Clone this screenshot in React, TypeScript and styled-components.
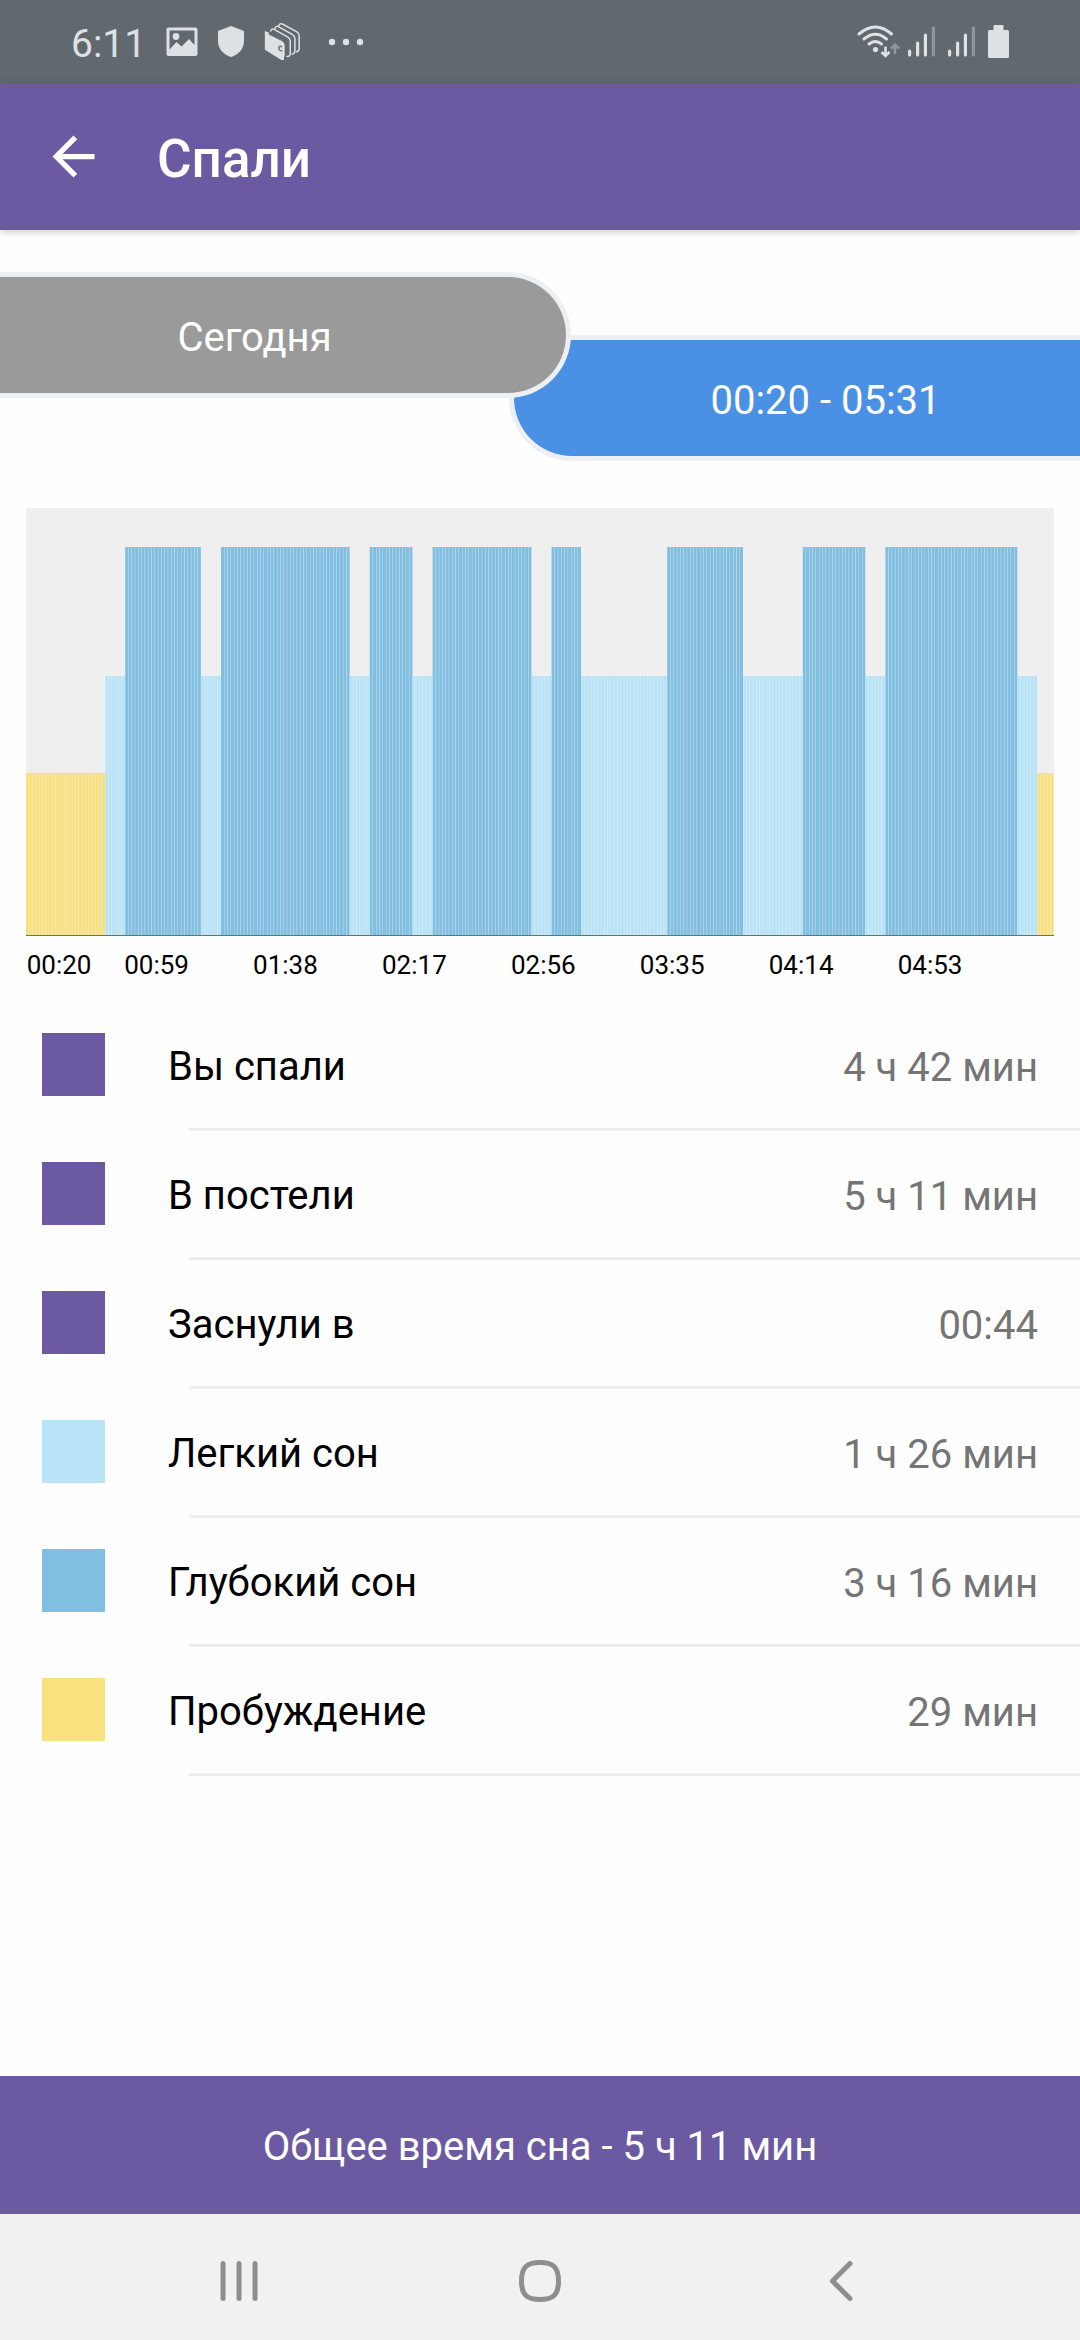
import React from 'react';
import styled, { createGlobalStyle } from 'styled-components';

const color = {
  purple: '#6b5aa2',
  deep: '#80bfe1',
  light: '#b9e4f7',
  awake: '#f9e180',
  line: '#ededed',
  status: '#dde1e4',
  nav: '#8e8e8e',
};

const GlobalStyle = createGlobalStyle`
  *, *::before, *::after { box-sizing: border-box; }
  body {
    margin: 0;
    background: #fefefe;
    font-family: Roboto, "Noto Sans", sans-serif;
    font-size: 40px;
    line-height: 48px;
    color: #000;
  }
  button {
    margin: 0;
    padding: 0;
    border: 0;
    background: none;
    color: inherit;
    font: inherit;
    cursor: pointer;
  }
  svg { display: block; flex: none; }
`;

const Screen = styled.div`
  display: flex;
  flex-direction: column;
  min-height: 100vh;
`;

const StatusBar = styled.div`
  display: flex;
  align-items: center;
  justify-content: space-between;
  height: 83px;
  padding: 0 71px;
  background: #61686e;
  color: ${color.status};
`;

const StatusGroup = styled.div<{ $gap: number }>`
  display: flex;
  align-items: center;
  gap: ${(p) => p.$gap}px;
`;

const Clock = styled.span`
  padding-top: 5px;
  font-size: 39px;
`;

const MoreSlot = styled.span`
  margin-left: 8px;
`;

const AppBar = styled.header`
  display: flex;
  align-items: center;
  gap: 52px;
  height: 147px;
  padding: 0 42px;
  background: ${color.purple};
  color: #fff;
  box-shadow: 0 2px 8px rgba(0, 0, 0, 0.2);
`;

const Title = styled.h1`
  margin: 0;
  padding-top: 4px;
  font-size: 53px;
  line-height: 64px;
  font-weight: 500;
`;

const Main = styled.main`
  flex: 1;
  display: flex;
  flex-direction: column;
`;

const Period = styled.div`
  display: flex;
  align-items: flex-start;
  margin-top: 42px;
`;

const Pill = styled.button`
  flex: 1 1 0;
  height: 126px;
  border: 5px solid #eeeff2;
  color: #fff;
`;

const DayPill = styled(Pill)`
  position: relative;
  z-index: 1;
  margin-right: -31px;
  padding: 6px 57px 0 0;
  border-left: 0;
  border-radius: 0 63px 63px 0;
  background: #9a9a9a;
`;

const RangePill = styled(Pill)`
  margin: 63px 0 0 -31px;
  padding: 6px 0 0 57px;
  border-right: 0;
  border-radius: 63px 0 0 63px;
  background: #4a90e4;
`;

const Chart = styled.figure`
  margin: 47px 26px 0;
`;

const Plot = styled.div`
  height: 428px;
  background: #efefef;
  border-bottom: 1px solid #6f6f6f;
`;

const Axis = styled.div`
  display: grid;
  grid-template-columns: minmax(0, 20fr) repeat(7, minmax(0, 39fr)) minmax(0, 18fr);
  margin-top: 14px;
  font-size: 26px;
  line-height: 30px;
`;

const Tick = styled.span`
  text-align: center;
  white-space: nowrap;
`;

const Stats = styled.ul`
  margin: 22px 0 0;
  padding: 0;
  list-style: none;
`;

const Stat = styled.li`
  display: flex;
  align-items: center;
  height: 129px;
  padding: 0 42px 4px;
  background: linear-gradient(${color.line}, ${color.line}) 189px 100% / 100% 3px no-repeat;
`;

const Swatch = styled.span<{ $color: string }>`
  width: 63px;
  height: 63px;
  margin-right: 63px;
  background: ${(p) => p.$color};
`;

const StatName = styled.span`
  flex: 1;
  padding-top: 4px;
`;

const StatValue = styled.span`
  padding-top: 6px;
  color: #757575;
`;

const Total = styled.footer`
  display: flex;
  align-items: center;
  justify-content: center;
  height: 138px;
  padding-top: 4px;
  background: ${color.purple};
  color: #fff;
`;

const NavBar = styled.nav`
  display: grid;
  grid-template-columns: repeat(3, 1fr);
  height: 126px;
  padding: 8px 88px 0;
  background: #f1f1f1;
`;

const NavButton = styled.button`
  display: flex;
  align-items: center;
  justify-content: center;
`;

type Phase = 'awake' | 'light' | 'deep';

const phases: [Phase, number][] = [
  ['awake', 24], ['light', 6], ['deep', 23], ['light', 6], ['deep', 39],
  ['light', 6], ['deep', 13], ['light', 6], ['deep', 30], ['light', 6],
  ['deep', 9], ['light', 26], ['deep', 23], ['light', 18], ['deep', 19],
  ['light', 6], ['deep', 40], ['light', 6], ['awake', 5],
];

const phaseHeight: Record<Phase, number> = { awake: 162, light: 259, deep: 388 };

// One entry per minute of the night.
const minutes: Phase[] = phases.flatMap(([phase, n]) => Array<Phase>(n).fill(phase));

const ticks = ['00:20', '00:59', '01:38', '02:17', '02:56', '03:35', '04:14', '04:53'];

const stats = [
  { name: 'Вы спали', value: '4 ч 42 мин', color: color.purple },
  { name: 'В постели', value: '5 ч 11 мин', color: color.purple },
  { name: 'Заснули в', value: '00:44', color: color.purple },
  { name: 'Легкий сон', value: '1 ч 26 мин', color: color.light },
  { name: 'Глубокий сон', value: '3 ч 16 мин', color: color.deep },
  { name: 'Пробуждение', value: '29 мин', color: color.awake },
];

const SleepPlot = () => (
  <svg width="100%" height="427" viewBox={`0 0 ${minutes.length} 427`} preserveAspectRatio="none" role="img" aria-label="Фазы сна">
    {minutes.map((phase, i) => (
      <rect key={i} x={i} y={427 - phaseHeight[phase]} width="0.9" height={phaseHeight[phase]} fill={color[phase]} />
    ))}
  </svg>
);

const PictureIcon = () => (
  <svg width="32" height="30" viewBox="0 0 32 30">
    <path fill="currentColor" fillRule="evenodd" d="M2.5 0.5h27a2 2 0 0 1 2 2v24.500a2 2 0 0 1-2 2h-27a2 2 0 0 1-2-2v-24.500a2 2 0 0 1 2-2zM3.500 3.500v19l7-7.500 5 4.500 7.500-7.500 5.500 6v-14.500z" />
    <circle cx="10" cy="9.500" r="3.400" fill="currentColor" />
  </svg>
);

const ShieldIcon = () => (
  <svg width="26" height="31" viewBox="0 0 26 31">
    <path fill="currentColor" d="M13 0 26 5v10c0 7.500-5 13.500-13 16C5 28.500 0 22.500 0 15V5z" />
  </svg>
);

const WalletIcon = () => (
  <svg width="36" height="37" viewBox="792 72 108 112">
    <g fill="none" stroke="currentColor" strokeWidth="4.500" strokeLinejoin="round" strokeLinecap="round">
      <path d="M837 80q2-8 10-5l44 24q7 4 7 12v38q0 8-8 10" />
      <path d="M825 88q2-8 10-5l43 24q7 4 7 12v38q0 8-8 9" />
      <path d="M812 96q2-8 10-5l42 24q7 4 7 12v38q0 9-10 8" />
    </g>
    <path fill="currentColor" d="M794 96l12 5v6l38 19q10 5 10 15v29q0 4-2 4v10h-8l-50-31z" />
    <path d="M846 145q-4-4-8-2-4 4-1 9 4 6 10 4" fill="none" stroke="#61686e" strokeWidth="4" />
  </svg>
);

const MoreIcon = () => (
  <svg width="36" height="8" viewBox="0 0 36 8">
    <g fill="currentColor">
      <circle cx="4" cy="4" r="3.200" />
      <circle cx="18" cy="4" r="3.200" />
      <circle cx="32" cy="4" r="3.200" />
    </g>
  </svg>
);

const WifiIcon = () => (
  <svg width="43" height="33" viewBox="857 25 43 33">
    <g fill="none" stroke="currentColor" strokeWidth="3" strokeLinecap="round">
      <path d="M859 34Q875.500 20 891.500 34" />
      <path d="M864 39Q875.500 29.500 886.500 39" />
      <path d="M869 44Q875.500 39 881.500 44" />
    </g>
    <circle cx="875.500" cy="49.500" r="2.600" fill="currentColor" />
    <path d="M885.500 46.500v9M881.500 52l4 4 4-4" fill="none" stroke="currentColor" strokeWidth="2.600" />
    <path d="M895 54v-9M891 48.500l4-4 4 4" fill="none" stroke="#8e969d" strokeWidth="2.600" />
  </svg>
);

const SignalIcon = () => (
  <svg width="27" height="31" viewBox="0 0 27 31">
    <g fill="currentColor">
      <rect x="0" y="23.500" width="3.200" height="7" rx="1.500" />
      <rect x="8" y="15.500" width="3.200" height="15" rx="1.500" />
      <rect x="15.800" y="7.500" width="3.200" height="23" rx="1.500" />
      <rect x="23.800" y="0.500" width="3.200" height="30" rx="1.500" fill="#8e969d" />
    </g>
  </svg>
);

const BatteryIcon = () => (
  <svg width="21" height="33" viewBox="0 0 21 33">
    <path fill="currentColor" d="M6.500 0h8a1 1 0 0 1 1 1v4h4a1.500 1.500 0 0 1 1.500 1.500v25a1.500 1.500 0 0 1-1.500 1.500h-18a1.500 1.500 0 0 1-1.500-1.500v-25a1.500 1.500 0 0 1 1.500-1.500h4v-4a1 1 0 0 1 1-1z" />
  </svg>
);

const BackArrow = () => (
  <svg width="63" height="63" viewBox="0 0 24 24">
    <path fill="currentColor" d="M20 11H7.830l5.590-5.590L12 4l-8 8 8 8 1.410-1.410L7.830 13H20v-2z" />
  </svg>
);

export default function App() {
  return (
    <Screen>
      <GlobalStyle />
      <StatusBar>
        <StatusGroup $gap={20}>
          <Clock>6:11</Clock>
          <PictureIcon />
          <ShieldIcon />
          <WalletIcon />
          <MoreSlot>
            <MoreIcon />
          </MoreSlot>
        </StatusGroup>
        <StatusGroup $gap={13}>
          <StatusGroup $gap={8}>
            <WifiIcon />
            <SignalIcon />
          </StatusGroup>
          <SignalIcon />
          <BatteryIcon />
        </StatusGroup>
      </StatusBar>

      <AppBar>
        <button type="button" aria-label="Назад">
          <BackArrow />
        </button>
        <Title>Спали</Title>
      </AppBar>

      <Main>
        <Period>
          <DayPill type="button">Сегодня</DayPill>
          <RangePill type="button">00:20 - 05:31</RangePill>
        </Period>

        <Chart>
          <Plot>
            <SleepPlot />
          </Plot>
          <Axis>
            {ticks.map((t) => (
              <Tick key={t}>{t}</Tick>
            ))}
          </Axis>
        </Chart>

        <Stats>
          {stats.map((s) => (
            <Stat key={s.name}>
              <Swatch $color={s.color} />
              <StatName>{s.name}</StatName>
              <StatValue>{s.value}</StatValue>
            </Stat>
          ))}
        </Stats>
      </Main>

      <Total>Общее время сна - 5 ч 11 мин</Total>

      <NavBar>
        <NavButton type="button" aria-label="Недавние">
          <svg width="38" height="40" viewBox="0 0 38 40" fill="none" stroke={color.nav} strokeWidth="5" strokeLinecap="round">
            <path d="M3 2.500v35M19 2.500v35M35 2.500v35" />
          </svg>
        </NavButton>
        <NavButton type="button" aria-label="Домой">
          <svg width="42" height="42" viewBox="0 0 42 42" fill="none" stroke={color.nav} strokeWidth="5">
            <path d="M21 2.500C34 2.500 39.500 7 39.500 21S34 39.500 21 39.500 2.500 35 2.500 21 8 2.500 21 2.500z" />
          </svg>
        </NavButton>
        <NavButton type="button" aria-label="Назад">
          <svg width="24" height="40" viewBox="0 0 24 40" fill="none" stroke={color.nav} strokeWidth="5" strokeLinecap="round" strokeLinejoin="round">
            <path d="M21 2.500 3.500 20 21 37.500" />
          </svg>
        </NavButton>
      </NavBar>
    </Screen>
  );
}
